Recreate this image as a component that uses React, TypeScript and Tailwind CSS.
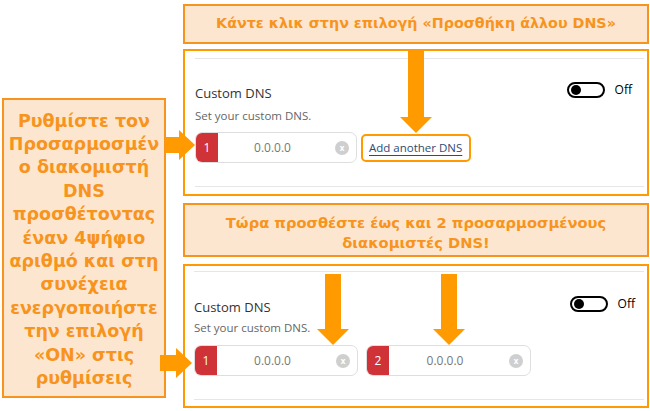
import React from "react";

const callout =
  "border-2 border-[#f7941d] bg-[#fde6cf] text-[#f7941d] font-bold text-center font-['DejaVu_Sans',sans-serif]";

function Toggle({ className = "" }: { className?: string }) {
  return (
    <div className={"flex items-center " + className}>
      <div className="w-[38px] h-[16px] rounded-full border-2 border-black flex items-center pl-[2px]">
        <div className="w-[10px] h-[10px] rounded-full bg-black" />
      </div>
      <span className="ml-[10px] text-[12px] leading-[16px] text-black">Off</span>
    </div>
  );
}

function DnsInput({ n, width }: { n: number; width: string }) {
  return (
    <div className={"h-[31px] flex rounded-[7px] border border-[#dedede] bg-white overflow-hidden " + width}>
      <div className="w-[22px] shrink-0 bg-[#cf3237] text-white text-[12px] flex items-center justify-center">
        {n}
      </div>
      <div className="flex-1 flex items-center justify-center pr-[8px] text-[12px] text-[#777]">0.0.0.0</div>
      <div className="w-[14px] h-[14px] self-center mr-[7px] rounded-full bg-[#cfcfcf] text-white text-[8px] leading-[14px] text-center font-bold">
        x
      </div>
    </div>
  );
}

function ArrowDown({ left, top, height }: { left: number; top: number; height: number }) {
  const h = height;
  return (
    <svg
      className="absolute"
      style={{ left, top }}
      width={32}
      height={h}
      viewBox={`0 0 32 ${h}`}
    >
      <polygon
        points={`8,0 24,0 24,${h - 16} 32,${h - 16} 16,${h} 0,${h - 16} 8,${h - 16}`}
        fill="#ff9a00"
      />
    </svg>
  );
}

function ArrowRight({ left, top, width }: { left: number; top: number; width: number }) {
  const w = width;
  return (
    <svg className="absolute" style={{ left, top }} width={w} height={30} viewBox={`0 0 ${w} 30`}>
      <polygon
        points={`0,7 ${w - 16},7 ${w - 16},0 ${w},15 ${w - 16},30 ${w - 16},23 0,23`}
        fill="#ff9a00"
      />
    </svg>
  );
}

export default function App() {
  return (
    <div className="relative w-[650px] h-[411px] bg-white overflow-hidden flex font-['Open_Sans',sans-serif]">
      {/* Left note */}
      <div className="w-[183px] shrink-0 pt-[98px] pl-[2px]">
        <div className={callout + " w-[164px] h-[300px] flex items-center justify-center text-[17.5px] leading-[23.4px] pt-[4px]"}>
          <p className="whitespace-nowrap">
            Ρυθμίστε τον
            <br />
            Προσαρμοσμέν
            <br />ο διακομιστή
            <br />
            DNS
            <br />
            προσθέτοντας
            <br />
            έναν 4ψήφιο
            <br />
            αριθμό και στη
            <br />
            συνέχεια
            <br />
            ενεργοποιήστε
            <br />
            την επιλογή
            <br />
            «ON» στις
            <br />
            ρυθμίσεις
          </p>
        </div>
      </div>

      {/* Right column */}
      <div className="w-[466px] shrink-0 pt-[4px] flex flex-col">
        <div className={callout + " h-[40px] flex items-center justify-center text-[14.3px]"}>
          Κάντε κλικ στην επιλογή «Προσθήκη άλλου DNS»
        </div>

        {/* Panel 1 */}
        <div className="mt-[5px] h-[147px] border-2 border-[#ff9a00] pt-[7px] pl-[10px] pr-[3px]">
          <div className="h-px bg-[#e6e6e6]" />
          <div className="mt-[23px] flex justify-between items-start pr-[12px]">
            <div className="mt-[2px] text-[13px] leading-[18px] text-[#333]">Custom DNS</div>
            <Toggle />
          </div>
          <div className="mt-[6px] text-[11.5px] leading-[16px] text-[#666]">Set your custom DNS.</div>
          <div className="mt-[8px] flex items-center">
            <DnsInput n={1} width="w-[162px]" />
            <div className="ml-[4px] h-[28px] w-[110px] rounded-[5px] border-2 border-[#ff9a00] flex items-center pl-[6px]">
              <span className="whitespace-nowrap text-[11.5px] leading-[16px] text-[#2d4c72] underline underline-offset-[3px]">
                Add another DNS
              </span>
            </div>
          </div>
          <div className="mt-[23px] h-px bg-[#e6e6e6]" />
        </div>

        {/* Middle note */}
        <div className={callout + " mt-[7px] h-[54px] pt-[8px] text-[14.7px] leading-[20px]"}>
          Τώρα προσθέστε έως και 2 προσαρμοσμένους
          <br />
          διακομιστές DNS!
        </div>

        {/* Panel 2 */}
        <div className="mt-[7px] h-[144px] border-2 border-[#ff9a00] pt-[5px] pl-[9px] pr-[3px]">
          <div className="h-px bg-[#e6e6e6]" />
          <div className="mt-[24px] flex justify-between items-start pr-[9px]">
            <div className="mt-[2px] text-[13px] leading-[18px] text-[#333]">Custom DNS</div>
            <Toggle />
          </div>
          <div className="mt-[4px] text-[11.5px] leading-[16px] text-[#666]">Set your custom DNS.</div>
          <div className="mt-[9px] flex items-center gap-[8px]">
            <DnsInput n={1} width="w-[164px]" />
            <DnsInput n={2} width="w-[165px]" />
          </div>
          <div className="mt-[23px] h-px bg-[#e6e6e6]" />
        </div>
      </div>

      <ArrowDown left={400} top={49} height={84} />
      <ArrowDown left={317} top={274} height={71} />
      <ArrowDown left={433} top={274} height={71} />
      <ArrowRight left={165} top={130} width={30} />
      <ArrowRight left={160} top={348} width={32} />
    </div>
  );
}
